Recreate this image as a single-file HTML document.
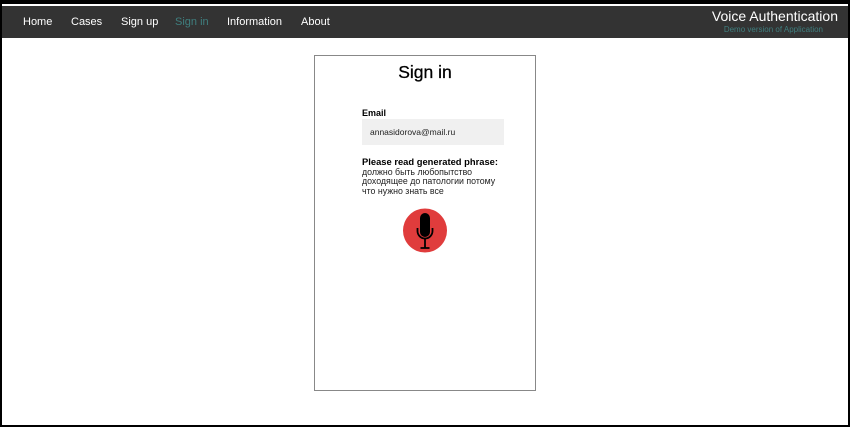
<!DOCTYPE html>
<html><head><meta charset="utf-8"><style>
*{margin:0;padding:0;box-sizing:border-box}
body{width:850px;height:427px;background:#fff;font-family:"Liberation Sans",sans-serif;position:relative;overflow:hidden}
.frame{position:absolute;left:0;top:0;width:850px;height:427px;border:2px solid #000;border-top:4px solid #000}
.nav{position:absolute;left:2px;top:6px;width:846px;height:32px;background:#333}
.nav a{position:absolute;top:10px;color:#fff;font-size:11px;text-decoration:none}
.title{position:absolute;right:10px;top:2px;color:#fff;font-size:14px}
.sub{position:absolute;right:25px;top:19px;color:#3f7f7f;font-size:8px}
.card{position:absolute;left:314px;top:55px;width:222px;height:336px;border:1px solid #888}
h1{position:absolute;left:0;width:220px;top:6px;text-align:center;font-size:17.5px;font-weight:normal;color:#000;-webkit-text-stroke:0.3px #000}
.lbl{position:absolute;left:47px;font-size:9px;font-weight:bold;color:#000}
.inp{position:absolute;left:47px;top:63px;width:142px;height:26px;background:#f0f0f0;font-size:8.5px;padding:8px 0 0 8px;color:#222}
.ph{position:absolute;left:47px;top:112px;font-size:8.8px;line-height:9.3px;color:#222}
</style></head><body>
<div class="nav">
<a style="left:21px">Home</a><a style="left:69px">Cases</a><a style="left:119px">Sign up</a><a style="left:173px;color:#3f7f7f">Sign in</a><a style="left:225px">Information</a><a style="left:299px">About</a>
<div class="title">Voice Authentication</div><div class="sub">Demo version of Application</div>
</div>
<div class="card">
<h1>Sign in</h1>
<div class="lbl" style="top:52px">Email</div>
<div class="inp">annasidorova@mail.ru</div>
<div class="lbl" style="top:100px;font-size:9.4px">Please read generated phrase:</div>
<div class="ph">должно быть любопытство<br>доходящее до патологии потому<br>что нужно знать все</div>
</div>
<svg style="position:absolute;left:403px;top:208px" width="45" height="45" viewBox="0 0 45 45">
<circle cx="22" cy="22.5" r="22" fill="#e03c3c"/>
<rect x="17" y="5" width="10" height="24" rx="5" fill="#000"/>
<path d="M14.5 20v3a7.5 7.5 0 0 0 15 0v-3" fill="none" stroke="#000" stroke-width="1.8"/>
<path d="M22 30.5v9M17.5 40h9" stroke="#000" stroke-width="1.8" fill="none"/>
</svg>
<div class="frame"></div>
</body></html>
